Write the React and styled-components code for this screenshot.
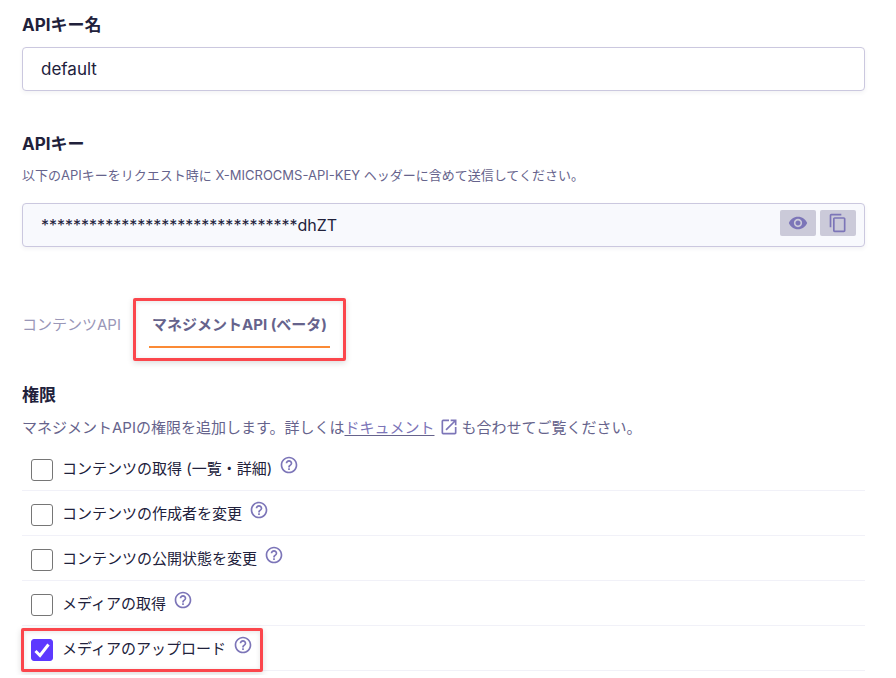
import React, { useState } from 'react';
import styled, { createGlobalStyle } from 'styled-components';
import { MdContentCopy, MdHelpOutline, MdOpenInNew, MdVisibility } from 'react-icons/md';

const PERMISSIONS = [
    { id: 'content-get', label: 'コンテンツの取得 (一覧・詳細)' },
    { id: 'content-author', label: 'コンテンツの作成者を変更' },
    { id: 'content-status', label: 'コンテンツの公開状態を変更' },
    { id: 'media-get', label: 'メディアの取得' },
    { id: 'media-upload', label: 'メディアのアップロード', marked: true },
];

const API_KEY = '********************************dhZT';

export default function App() {
    const [name, setName] = useState('default');
    const [checked, setChecked] = useState({ 'media-upload': true });

    const toggle = id => setChecked({ ...checked, [id]: !checked[id] });

    return (
        <Page>
            <GlobalStyle />
            <Field>
                <FieldLabel htmlFor="key-name">APIキー名</FieldLabel>
                <InputBox>
                    <TextInput id="key-name" value={name} onChange={e => setName(e.target.value)} />
                </InputBox>
            </Field>
            <KeyField>
                <FieldLabel htmlFor="key-value">APIキー</FieldLabel>
                <Hint>以下のAPIキーをリクエスト時に X-MICROCMS-API-KEY ヘッダーに含めて送信してください。</Hint>
                <InputBox $readOnly>
                    <TextInput id="key-value" value={API_KEY} readOnly />
                    <KeyActions>
                        <IconButton type="button" aria-label="表示"><MdVisibility size={20} /></IconButton>
                        <IconButton type="button" aria-label="コピー"><MdContentCopy size={20} /></IconButton>
                    </KeyActions>
                </InputBox>
            </KeyField>
            <Tabs>
                <Tab type="button">コンテンツAPI</Tab>
                <MarkedTab>
                    <Tab type="button" $active>マネジメントAPI (ベータ)</Tab>
                </MarkedTab>
            </Tabs>
            <Title>権限</Title>
            <Description>
                マネジメントAPIの権限を追加します。詳しくは
                <DocLink href="#document">ドキュメント</DocLink>
                <LinkIcon size={20} />
                も合わせてご覧ください。
            </Description>
            <PermissionList>
                {PERMISSIONS.map(({ id, label, marked }) => (
                    <PermissionRow key={id}>
                        <PermissionItem $marked={marked}>
                            <CheckWrap>
                                <Checkbox
                                    id={id}
                                    type="checkbox"
                                    checked={!!checked[id]}
                                    onChange={() => toggle(id)}
                                />
                                {checked[id] && (
                                    <CheckMark viewBox="0 0 22 22">
                                        <path d="M4.5 12 9 16.5 17.5 5.5" />
                                    </CheckMark>
                                )}
                            </CheckWrap>
                            <PermissionLabel htmlFor={id}>{label}</PermissionLabel>
                            <HelpButton type="button" aria-label="ヘルプ"><MdHelpOutline size={20} /></HelpButton>
                        </PermissionItem>
                    </PermissionRow>
                ))}
            </PermissionList>
        </Page>
    );
}

const GlobalStyle = createGlobalStyle`
    * {
        box-sizing: border-box;
    }
    body {
        margin: 0;
        background: #fff;
        color: #21213b;
        font-family: Inter, "Noto Sans CJK JP", sans-serif;
    }
    button, input {
        font-family: inherit;
        color: inherit;
    }
    button {
        border: 0;
        padding: 0;
        cursor: pointer;
    }
`;

const Page = styled.main`
    padding: 13px 31px 4px 22px;
`;

const Field = styled.div`
    display: flex;
    flex-direction: column;
`;

const KeyField = styled(Field)`
    margin-top: 41px;
`;

const FieldLabel = styled.label`
    font-size: 17px;
    font-weight: 700;
    line-height: 24px;
`;

const Hint = styled.p`
    margin: 9px 0 8px;
    font-size: 13px;
    line-height: 20px;
    color: #66638c;
`;

const InputBox = styled.div`
    display: flex;
    align-items: center;
    height: 44px;
    margin-top: 10px;
    padding: 0 8px 0 18px;
    border: 1px solid #cbc8df;
    border-radius: 4px;
    background: ${({ $readOnly }) => ($readOnly ? '#f8f9fd' : '#fff')};
    box-shadow: 0 2px 4px rgba(50, 45, 90, 0.06);
`;

const TextInput = styled.input`
    flex: 1;
    min-width: 0;
    padding: 0;
    border: 0;
    outline: 0;
    background: transparent;
    font-size: 17px;
    line-height: 24px;

    &:read-only {
        font-size: 16px;
    }
`;

const KeyActions = styled.div`
    display: flex;
    gap: 4px;
    padding-bottom: 4px;
`;

const IconButton = styled.button`
    display: flex;
    align-items: center;
    justify-content: center;
    width: 36px;
    height: 26px;
    border-radius: 2px;
    background: #cbcad9;
    color: #7c75b8;
`;

const Tabs = styled.div`
    display: flex;
    align-items: center;
    gap: 12px;
    margin-top: 51px;
`;

const MarkedTab = styled.div`
    padding: 10px 13px;
    border: 3px solid #fb464c;
    border-radius: 2px;
    box-shadow: 0 2px 6px rgba(0, 0, 0, 0.14), inset 0 1px 5px rgba(0, 0, 0, 0.1);
`;

const Tab = styled.button`
    height: 37px;
    padding: 0 ${({ $active }) => ($active ? '3px' : '0')} 8px;
    background: none;
    border-bottom: 2px solid ${({ $active }) => ($active ? '#fb8a35' : 'transparent')};
    font-size: 15px;
    font-weight: ${({ $active }) => ($active ? 700 : 400)};
    line-height: 24px;
    color: ${({ $active }) => ($active ? '#66638c' : '#9a97b8')};
`;

const Title = styled.h2`
    margin: 22px 0 0;
    font-size: 17px;
    font-weight: 700;
    line-height: 24px;
`;

const Description = styled.p`
    margin: 9px 0 0;
    font-size: 15px;
    line-height: 24px;
    color: #66638c;
`;

const DocLink = styled.a`
    color: #7c75b8;
    text-decoration: underline 1px #66638c;
    text-underline-offset: 2px;
    text-decoration-skip-ink: none;
`;

const LinkIcon = styled(MdOpenInNew)`
    margin: 0 2px 0 5px;
    vertical-align: -4px;
    color: #7c75b8;
`;

const PermissionList = styled.ul`
    margin: 6px 0 0;
    padding: 0;
    list-style: none;
`;

const PermissionRow = styled.li`
    display: flex;
    height: 45px;
    border-bottom: 1px solid #f1f1f8;
`;

const PermissionItem = styled.div`
    position: relative;
    display: flex;
    align-items: center;
    padding: 2px 9px 0;

    ${({ $marked }) => $marked && `
        &::after {
            content: '';
            position: absolute;
            inset: 2px -1px -2px;
            border: 3px solid #fb464c;
            border-radius: 2px;
            box-shadow: 0 2px 6px rgba(0, 0, 0, 0.14), inset 0 1px 5px rgba(0, 0, 0, 0.1);
            pointer-events: none;
        }
    `}
`;

const CheckWrap = styled.span`
    position: relative;
    display: flex;
    padding-top: 2px;
`;

const Checkbox = styled.input`
    appearance: none;
    width: 22px;
    height: 22px;
    margin: 0;
    border: 1px solid #767676;
    border-radius: 3px;
    background: #fff;

    &:checked {
        border-color: #5d39ff;
        background: #5d39ff;
    }
`;

const CheckMark = styled.svg`
    position: absolute;
    left: 0;
    bottom: 0;
    width: 22px;
    height: 22px;
    fill: none;
    stroke: #fff;
    stroke-width: 3;
    pointer-events: none;
`;

const PermissionLabel = styled.label`
    margin-left: 9px;
    font-size: 15px;
    line-height: 24px;
`;

const HelpButton = styled.button`
    display: flex;
    margin-left: 7px;
    padding-bottom: 8px;
    background: none;
    color: #7c75b8;
`;
